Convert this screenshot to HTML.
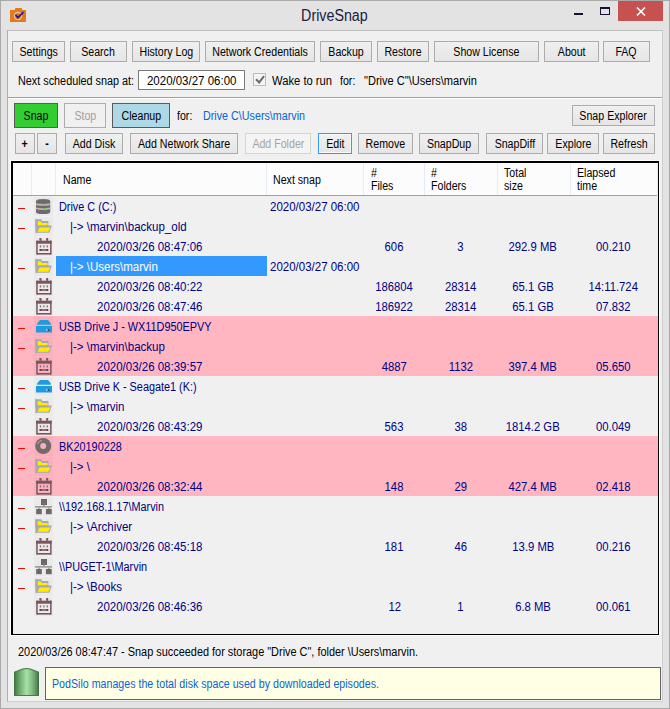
<!DOCTYPE html>
<html><head><meta charset="utf-8"><style>
*{box-sizing:border-box;margin:0;padding:0}
html,body{width:670px;height:709px;overflow:hidden}
body{position:relative;background:#e3e3e3;font-family:"Liberation Sans",sans-serif;font-size:12px;color:#000}
.abs{position:absolute}
.tx{position:absolute;white-space:nowrap}
.tx span{display:inline-block}
.win{position:absolute;left:0;top:0;width:670px;height:709px;border:1px solid #a9a9a9}
.panel{position:absolute;left:7px;top:30px;width:656px;height:672px;background:#f0f0f0;border-top:1px solid #c0c0c0;border-left:1px solid #b0b0b0;border-right:1px solid #cfcfcf;border-bottom:1px solid #cfcfcf}
.btn{position:absolute;border:1px solid #acacac;background:linear-gradient(#f0f0f0,#e5e5e5)}
.btn.dis{border-color:#d5d5d5;background:#f4f4f4}
.btn.focus{border-color:#3399ff;box-shadow:inset 0 0 0 1px #f4f9fd}
.row{position:absolute;left:13px;width:645px;height:20px}
.minus{position:absolute;left:18px;width:7px;height:1px;background:#f00}
.icbg{position:absolute;left:34px;width:19px;height:19px}
.ic{position:absolute;left:34px;width:18px;height:18px}
.ic svg{display:block}
.sel{position:absolute;left:56px;width:211px;height:20px;background:#3399ff}
.vsep{position:absolute;top:163px;width:1px;height:32px;background:#e3ecf7}
</style></head><body>
<div class="win"></div>
<svg class="abs" style="left:9px;top:7px" width="18" height="16" viewBox="0 0 18 16"><path d="M1 3 H5.5 L6.5 1 H12.5 L13.5 3 H17 V15 H1 Z" fill="#e07b22"/><circle cx="9" cy="9" r="4" fill="#f3c9a0"/><circle cx="9" cy="9" r="3" fill="#e07b22"/><path d="M6.5 7.8 L8.8 10.6 L14.5 5.2" stroke="#2c1a9a" stroke-width="1.8" fill="none"/></svg>
<div class="tx" style="left:-1px;top:7px;font-size:15.6px;line-height:18px;color:#202040;width:670px;text-align:center;"><span style="transform:scaleX(0.915);transform-origin:50% 0">DriveSnap</span></div>
<div class="abs" style="left:574px;top:13px;width:9px;height:2px;background:#1a1030"></div>
<div class="abs" style="left:600px;top:7px;width:10px;height:8px;border:1px solid #1a1030;border-top-width:2px"></div>
<div class="abs" style="left:618px;top:1px;width:45px;height:20px;background:#c75050"></div>
<svg class="abs" style="left:636px;top:7px" width="10" height="9" viewBox="0 0 10 9"><path d="M1 0.5 L9 8.5 M9 0.5 L1 8.5" stroke="#fff" stroke-width="1.6"/></svg>

<div class="panel"></div>
<div class="abs" style="left:8px;top:97px;width:654px;height:1px;background:#a0a0a0"></div>
<div class="abs" style="left:8px;top:98px;width:654px;height:1px;background:#ffffff"></div>

<div class="btn " style="left:12px;top:41px;width:53px;height:21px;"></div><div class="tx" style="left:12px;top:45px;font-size:12px;line-height:14px;width:53px;text-align:center;"><span style="transform:scaleX(0.885);transform-origin:50% 0">Settings</span></div>
<div class="btn " style="left:70px;top:41px;width:57px;height:21px;"></div><div class="tx" style="left:70px;top:45px;font-size:12px;line-height:14px;width:57px;text-align:center;"><span style="transform:scaleX(0.885);transform-origin:50% 0">Search</span></div>
<div class="btn " style="left:132px;top:41px;width:68px;height:21px;"></div><div class="tx" style="left:132px;top:45px;font-size:12px;line-height:14px;width:68px;text-align:center;"><span style="transform:scaleX(0.885);transform-origin:50% 0">History Log</span></div>
<div class="btn " style="left:205px;top:41px;width:110px;height:21px;"></div><div class="tx" style="left:205px;top:45px;font-size:12px;line-height:14px;width:110px;text-align:center;"><span style="transform:scaleX(0.885);transform-origin:50% 0">Network Credentials</span></div>
<div class="btn " style="left:320px;top:41px;width:52px;height:21px;"></div><div class="tx" style="left:320px;top:45px;font-size:12px;line-height:14px;width:52px;text-align:center;"><span style="transform:scaleX(0.885);transform-origin:50% 0">Backup</span></div>
<div class="btn " style="left:377px;top:41px;width:52px;height:21px;"></div><div class="tx" style="left:377px;top:45px;font-size:12px;line-height:14px;width:52px;text-align:center;"><span style="transform:scaleX(0.885);transform-origin:50% 0">Restore</span></div>
<div class="btn " style="left:434px;top:41px;width:105px;height:21px;"></div><div class="tx" style="left:434px;top:45px;font-size:12px;line-height:14px;width:105px;text-align:center;"><span style="transform:scaleX(0.885);transform-origin:50% 0">Show License</span></div>
<div class="btn " style="left:544px;top:41px;width:55px;height:21px;"></div><div class="tx" style="left:544px;top:45px;font-size:12px;line-height:14px;width:55px;text-align:center;"><span style="transform:scaleX(0.885);transform-origin:50% 0">About</span></div>
<div class="btn " style="left:603px;top:41px;width:47px;height:21px;"></div><div class="tx" style="left:603px;top:45px;font-size:12px;line-height:14px;width:47px;text-align:center;"><span style="transform:scaleX(0.885);transform-origin:50% 0">FAQ</span></div>
<div class="btn " style="left:15px;top:133px;width:20px;height:21px;"></div><div class="tx" style="left:15px;top:137px;font-size:12px;line-height:14px;width:20px;text-align:center;font-weight:bold;"><span style="transform:scaleX(0.885);transform-origin:50% 0">+</span></div>
<div class="btn " style="left:37px;top:133px;width:20px;height:21px;"></div><div class="tx" style="left:37px;top:137px;font-size:12px;line-height:14px;width:20px;text-align:center;font-weight:bold;"><span style="transform:scaleX(0.885);transform-origin:50% 0">-</span></div>
<div class="btn " style="left:65px;top:133px;width:58px;height:21px;"></div><div class="tx" style="left:65px;top:137px;font-size:12px;line-height:14px;width:58px;text-align:center;"><span style="transform:scaleX(0.885);transform-origin:50% 0">Add Disk</span></div>
<div class="btn " style="left:130px;top:133px;width:108px;height:21px;"></div><div class="tx" style="left:130px;top:137px;font-size:12px;line-height:14px;width:108px;text-align:center;"><span style="transform:scaleX(0.885);transform-origin:50% 0">Add Network Share</span></div>
<div class="btn dis" style="left:245px;top:133px;width:66px;height:21px;"></div><div class="tx" style="left:245px;top:137px;font-size:12px;line-height:14px;width:66px;text-align:center;color:#a3a3a3;"><span style="transform:scaleX(0.885);transform-origin:50% 0">Add Folder</span></div>
<div class="btn focus" style="left:318px;top:133px;width:34px;height:21px;"></div><div class="tx" style="left:318px;top:137px;font-size:12px;line-height:14px;width:34px;text-align:center;"><span style="transform:scaleX(0.885);transform-origin:50% 0">Edit</span></div>
<div class="btn " style="left:358px;top:133px;width:55px;height:21px;"></div><div class="tx" style="left:358px;top:137px;font-size:12px;line-height:14px;width:55px;text-align:center;"><span style="transform:scaleX(0.885);transform-origin:50% 0">Remove</span></div>
<div class="btn " style="left:419px;top:133px;width:60px;height:21px;"></div><div class="tx" style="left:419px;top:137px;font-size:12px;line-height:14px;width:60px;text-align:center;"><span style="transform:scaleX(0.885);transform-origin:50% 0">SnapDup</span></div>
<div class="btn " style="left:486px;top:133px;width:57px;height:21px;"></div><div class="tx" style="left:486px;top:137px;font-size:12px;line-height:14px;width:57px;text-align:center;"><span style="transform:scaleX(0.885);transform-origin:50% 0">SnapDiff</span></div>
<div class="btn " style="left:547px;top:133px;width:52px;height:21px;"></div><div class="tx" style="left:547px;top:137px;font-size:12px;line-height:14px;width:52px;text-align:center;"><span style="transform:scaleX(0.885);transform-origin:50% 0">Explore</span></div>
<div class="btn " style="left:603px;top:133px;width:52px;height:21px;"></div><div class="tx" style="left:603px;top:137px;font-size:12px;line-height:14px;width:52px;text-align:center;"><span style="transform:scaleX(0.885);transform-origin:50% 0">Refresh</span></div>
<div class="btn " style="left:572px;top:105px;width:83px;height:21px;"></div><div class="tx" style="left:572px;top:109px;font-size:12px;line-height:14px;width:83px;text-align:center;"><span style="transform:scaleX(0.885);transform-origin:50% 0">Snap Explorer</span></div>

<div class="tx" style="left:18px;top:74px;font-size:12px;line-height:14px;"><span style="transform:scaleX(0.902);transform-origin:0 0">Next scheduled snap at:</span></div>
<div class="abs" style="left:138px;top:70px;width:107px;height:20px;border:1px solid #7a7a7a;background:#fff"></div>
<div class="tx" style="left:138px;top:74px;font-size:12px;line-height:14px;width:107px;text-align:center;"><span style="transform:scaleX(0.958);transform-origin:50% 0">2020/03/27 06:00</span></div>
<div class="abs" style="left:253px;top:73px;width:13px;height:13px;border:1px solid #bcbcbc;background:#f4f4f4"></div>
<svg class="abs" style="left:253px;top:73px" width="13" height="13" viewBox="0 0 13 13"><path d="M3 6.2 L6.2 9.4 L11 3.2" stroke="#6f6a6a" stroke-width="2" fill="none"/></svg>
<div class="tx" style="left:272px;top:74px;font-size:12px;line-height:14px;"><span style="transform:scaleX(0.935);transform-origin:0 0">Wake to run</span></div>
<div class="tx" style="left:340px;top:74px;font-size:12px;line-height:14px;"><span style="transform:scaleX(0.885);transform-origin:0 0">for:</span></div>
<div class="tx" style="left:364px;top:74px;font-size:12px;line-height:14px;"><span style="transform:scaleX(0.922);transform-origin:0 0">&quot;Drive C&quot;\Users\marvin</span></div>

<div class="abs" style="left:14px;top:103px;width:44px;height:25px;border:1px solid #5a5a5a;background:#32cd32"></div>
<div class="tx" style="left:14px;top:109px;font-size:12px;line-height:14px;width:44px;text-align:center;"><span style="transform:scaleX(0.885);transform-origin:50% 0">Snap</span></div>
<div class="abs" style="left:64px;top:103px;width:42px;height:25px;border:1px solid #adadad;background:#f0f0f0"></div>
<div class="tx" style="left:64px;top:109px;font-size:12px;line-height:14px;color:#a0a0a0;width:42px;text-align:center;"><span style="transform:scaleX(0.885);transform-origin:50% 0">Stop</span></div>
<div class="abs" style="left:112px;top:103px;width:58px;height:25px;border:1px solid #5a5a5a;background:#add8e6"></div>
<div class="tx" style="left:112px;top:109px;font-size:12px;line-height:14px;width:58px;text-align:center;"><span style="transform:scaleX(0.885);transform-origin:50% 0">Cleanup</span></div>
<div class="tx" style="left:177px;top:109px;font-size:12px;line-height:14px;"><span style="transform:scaleX(0.885);transform-origin:0 0">for:</span></div>
<div class="tx" style="left:203px;top:109px;font-size:12px;line-height:14px;color:#0a64d2;"><span style="transform:scaleX(0.895);transform-origin:0 0">Drive C\Users\marvin</span></div>

<div class="abs" style="left:10px;top:160px;width:650px;height:476px;border:1px solid #fff"></div>
<div class="abs" style="left:11px;top:161px;width:648px;height:474px;border-top:2px solid #000;border-left:2px solid #000;border-right:1px solid #000;border-bottom:1px solid #000;background:#f0f0f0"></div>
<div class="abs" style="left:13px;top:163px;width:645px;height:32px;background:#fcfcfc"></div>
<div class="abs" style="left:13px;top:195px;width:644px;height:1px;background:#a0a0a0"></div>
<div class="vsep" style="left:31px"></div>
<div class="vsep" style="left:55px"></div>
<div class="vsep" style="left:266px"></div>
<div class="vsep" style="left:363px"></div>
<div class="vsep" style="left:424px"></div>
<div class="vsep" style="left:497px"></div>
<div class="vsep" style="left:570px"></div>
<div class="vsep" style="left:657px"></div>
<div class="tx" style="left:63px;top:173px;font-size:12px;line-height:14px;"><span style="transform:scaleX(0.885);transform-origin:0 0">Name</span></div>
<div class="tx" style="left:273px;top:173px;font-size:12px;line-height:14px;"><span style="transform:scaleX(0.885);transform-origin:0 0">Next snap</span></div>
<div class="tx" style="left:371px;top:167px;font-size:12px;line-height:13px;"><span style="transform:scaleX(0.885);transform-origin:0 0">#</span></div><div class="tx" style="left:371px;top:180px;font-size:12px;line-height:13px;"><span style="transform:scaleX(0.885);transform-origin:0 0">Files</span></div>
<div class="tx" style="left:431px;top:167px;font-size:12px;line-height:13px;"><span style="transform:scaleX(0.885);transform-origin:0 0">#</span></div><div class="tx" style="left:431px;top:180px;font-size:12px;line-height:13px;"><span style="transform:scaleX(0.885);transform-origin:0 0">Folders</span></div>
<div class="tx" style="left:504px;top:167px;font-size:12px;line-height:13px;"><span style="transform:scaleX(0.885);transform-origin:0 0">Total</span></div><div class="tx" style="left:504px;top:180px;font-size:12px;line-height:13px;"><span style="transform:scaleX(0.885);transform-origin:0 0">size</span></div>
<div class="tx" style="left:577px;top:167px;font-size:12px;line-height:13px;"><span style="transform:scaleX(0.885);transform-origin:0 0">Elapsed</span></div><div class="tx" style="left:577px;top:180px;font-size:12px;line-height:13px;"><span style="transform:scaleX(0.885);transform-origin:0 0">time</span></div>

<div class="row" style="top:196px;background:#f0f0f0"></div><div class="minus" style="top:208px"></div><div class="icbg" style="top:197px;background:#eaeaea"></div><div class="ic" style="top:197px"><svg width="18" height="18" viewBox="0 0 18 18"><path d="M2 4 Q2 2 9 2 Q16.2 2 16.2 4 V15 Q16.2 17 9 17 Q2 17 2 15 Z" fill="#6e6868"/><path d="M2 6.3 Q9 7.6 16.2 6.3 V8.2 Q9 9.5 2 8.2 Z" fill="#bab5b5"/><path d="M2 10.6 Q9 11.9 16.2 10.6 V12.3 Q9 13.6 2 12.3 Z" fill="#bab5b5"/><g fill="#3fc23f"><rect x="6.8" y="5.8" width="1.3" height="1.3"/><rect x="12" y="5.8" width="1.3" height="1.3"/><rect x="9.8" y="10.8" width="1.3" height="1.3"/></g><g fill="#c47a8a"><rect x="2.8" y="3" width="1" height="1"/><rect x="8.5" y="2.2" width="1" height="1"/><rect x="4" y="12.8" width="1" height="1"/><rect x="11" y="12.8" width="1" height="1"/></g></svg></div><div class="tx" style="left:59px;top:200px;font-size:12px;line-height:14px;color:#000080;"><span style="transform:scaleX(0.905);transform-origin:0 0">Drive C (C:)</span></div><div class="tx" style="left:270px;top:200px;font-size:12px;line-height:14px;color:#000080;"><span style="transform:scaleX(0.958);transform-origin:0 0">2020/03/27 06:00</span></div>
<div class="row" style="top:216px;background:#f0f0f0"></div><div class="minus" style="top:228px"></div><div class="icbg" style="top:217px;background:#eaeaea"></div><div class="ic" style="top:217px"><svg width="18" height="18" viewBox="0 0 18 18"><path d="M1.4 2.3 H7.2 L8.2 4 H14.4 V11 H1.4 Z" fill="#a8a8b2"/><path d="M3.6 4.2 H6.8 L7.8 6 H13.6 V8.6 H3.6 Z" fill="#ffec00"/><path d="M4.2 8.6 H17.8 L15.4 15.8 H1.6 Z" fill="#a8a8b2"/><path d="M5.6 10.4 H16.4 L14.2 14.8 H3.4 Z" fill="#ffec00"/><rect x="1.4" y="2.3" width="1.9" height="13.5" fill="#a8a8b2"/></svg></div><div class="tx" style="left:70px;top:220px;font-size:12px;line-height:14px;color:#000080;"><span style="transform:scaleX(0.96);transform-origin:0 0">|-&gt; \marvin\backup_old</span></div>
<div class="row" style="top:236px;background:#f0f0f0"></div><div class="icbg" style="top:237px;background:#eaeaea"></div><div class="ic" style="top:237px"><svg width="18" height="18" viewBox="0 0 18 18"><g fill="#7a565c"><rect x="2.2" y="3.7" width="15.4" height="3"/><rect x="2.2" y="3.7" width="1.5" height="13.9"/><rect x="16.1" y="3.7" width="1.5" height="13.9"/><rect x="3" y="16" width="14" height="1.6"/><path d="M5.4 1 H7.2 L8 3.8 H5.4 Z"/><path d="M12.4 1 H14.2 L14.2 3.8 H11.8 Z"/></g><g fill="#7f6a6e"><rect x="5.8" y="8.4" width="1.3" height="2"/><rect x="12.6" y="8.4" width="1.3" height="2"/></g><rect x="9.2" y="8.4" width="1.3" height="2" fill="#8a7478"/><rect x="5.6" y="12" width="8.6" height="1.9" fill="#8a6a70"/><g fill="#6a3e46"><rect x="5.6" y="12" width="1.8" height="1.9"/><rect x="12.4" y="12" width="1.8" height="1.9"/></g></svg></div><div class="tx" style="left:97px;top:240px;font-size:12px;line-height:14px;color:#000080;"><span style="transform:scaleX(0.958);transform-origin:0 0">2020/03/26 08:47:06</span></div><div class="tx" style="left:344.5px;top:240px;font-size:12px;line-height:14px;color:#000080;width:100px;text-align:center;"><span style="transform:scaleX(0.94);transform-origin:50% 0">606</span></div><div class="tx" style="left:410.5px;top:240px;font-size:12px;line-height:14px;color:#000080;width:100px;text-align:center;"><span style="transform:scaleX(0.94);transform-origin:50% 0">3</span></div><div class="tx" style="left:483px;top:240px;font-size:12px;line-height:14px;color:#000080;width:100px;text-align:center;"><span style="transform:scaleX(0.94);transform-origin:50% 0">292.9 MB</span></div><div class="tx" style="left:563px;top:240px;font-size:12px;line-height:14px;color:#000080;width:100px;text-align:center;"><span style="transform:scaleX(0.94);transform-origin:50% 0">00.210</span></div>
<div class="row" style="top:256px;background:#f0f0f0"></div><div class="minus" style="top:268px"></div><div class="icbg" style="top:257px;background:#eaeaea"></div><div class="ic" style="top:257px"><svg width="18" height="18" viewBox="0 0 18 18"><path d="M1.4 2.3 H7.2 L8.2 4 H14.4 V11 H1.4 Z" fill="#a8a8b2"/><path d="M3.6 4.2 H6.8 L7.8 6 H13.6 V8.6 H3.6 Z" fill="#ffec00"/><path d="M4.2 8.6 H17.8 L15.4 15.8 H1.6 Z" fill="#a8a8b2"/><path d="M5.6 10.4 H16.4 L14.2 14.8 H3.4 Z" fill="#ffec00"/><rect x="1.4" y="2.3" width="1.9" height="13.5" fill="#a8a8b2"/></svg></div><div class="sel" style="top:256px"></div><div class="tx" style="left:70px;top:260px;font-size:12px;line-height:14px;color:#fff;"><span style="transform:scaleX(0.96);transform-origin:0 0">|-&gt; \Users\marvin</span></div><div class="tx" style="left:270px;top:260px;font-size:12px;line-height:14px;color:#000080;"><span style="transform:scaleX(0.958);transform-origin:0 0">2020/03/27 06:00</span></div>
<div class="row" style="top:276px;background:#f0f0f0"></div><div class="icbg" style="top:277px;background:#eaeaea"></div><div class="ic" style="top:277px"><svg width="18" height="18" viewBox="0 0 18 18"><g fill="#7a565c"><rect x="2.2" y="3.7" width="15.4" height="3"/><rect x="2.2" y="3.7" width="1.5" height="13.9"/><rect x="16.1" y="3.7" width="1.5" height="13.9"/><rect x="3" y="16" width="14" height="1.6"/><path d="M5.4 1 H7.2 L8 3.8 H5.4 Z"/><path d="M12.4 1 H14.2 L14.2 3.8 H11.8 Z"/></g><g fill="#7f6a6e"><rect x="5.8" y="8.4" width="1.3" height="2"/><rect x="12.6" y="8.4" width="1.3" height="2"/></g><rect x="9.2" y="8.4" width="1.3" height="2" fill="#8a7478"/><rect x="5.6" y="12" width="8.6" height="1.9" fill="#8a6a70"/><g fill="#6a3e46"><rect x="5.6" y="12" width="1.8" height="1.9"/><rect x="12.4" y="12" width="1.8" height="1.9"/></g></svg></div><div class="tx" style="left:97px;top:280px;font-size:12px;line-height:14px;color:#000080;"><span style="transform:scaleX(0.958);transform-origin:0 0">2020/03/26 08:40:22</span></div><div class="tx" style="left:344.5px;top:280px;font-size:12px;line-height:14px;color:#000080;width:100px;text-align:center;"><span style="transform:scaleX(0.94);transform-origin:50% 0">186804</span></div><div class="tx" style="left:410.5px;top:280px;font-size:12px;line-height:14px;color:#000080;width:100px;text-align:center;"><span style="transform:scaleX(0.94);transform-origin:50% 0">28314</span></div><div class="tx" style="left:483px;top:280px;font-size:12px;line-height:14px;color:#000080;width:100px;text-align:center;"><span style="transform:scaleX(0.94);transform-origin:50% 0">65.1 GB</span></div><div class="tx" style="left:563px;top:280px;font-size:12px;line-height:14px;color:#000080;width:100px;text-align:center;"><span style="transform:scaleX(0.94);transform-origin:50% 0">14:11.724</span></div>
<div class="row" style="top:296px;background:#f0f0f0"></div><div class="icbg" style="top:297px;background:#eaeaea"></div><div class="ic" style="top:297px"><svg width="18" height="18" viewBox="0 0 18 18"><g fill="#7a565c"><rect x="2.2" y="3.7" width="15.4" height="3"/><rect x="2.2" y="3.7" width="1.5" height="13.9"/><rect x="16.1" y="3.7" width="1.5" height="13.9"/><rect x="3" y="16" width="14" height="1.6"/><path d="M5.4 1 H7.2 L8 3.8 H5.4 Z"/><path d="M12.4 1 H14.2 L14.2 3.8 H11.8 Z"/></g><g fill="#7f6a6e"><rect x="5.8" y="8.4" width="1.3" height="2"/><rect x="12.6" y="8.4" width="1.3" height="2"/></g><rect x="9.2" y="8.4" width="1.3" height="2" fill="#8a7478"/><rect x="5.6" y="12" width="8.6" height="1.9" fill="#8a6a70"/><g fill="#6a3e46"><rect x="5.6" y="12" width="1.8" height="1.9"/><rect x="12.4" y="12" width="1.8" height="1.9"/></g></svg></div><div class="tx" style="left:97px;top:300px;font-size:12px;line-height:14px;color:#000080;"><span style="transform:scaleX(0.958);transform-origin:0 0">2020/03/26 08:47:46</span></div><div class="tx" style="left:344.5px;top:300px;font-size:12px;line-height:14px;color:#000080;width:100px;text-align:center;"><span style="transform:scaleX(0.94);transform-origin:50% 0">186922</span></div><div class="tx" style="left:410.5px;top:300px;font-size:12px;line-height:14px;color:#000080;width:100px;text-align:center;"><span style="transform:scaleX(0.94);transform-origin:50% 0">28314</span></div><div class="tx" style="left:483px;top:300px;font-size:12px;line-height:14px;color:#000080;width:100px;text-align:center;"><span style="transform:scaleX(0.94);transform-origin:50% 0">65.1 GB</span></div><div class="tx" style="left:563px;top:300px;font-size:12px;line-height:14px;color:#000080;width:100px;text-align:center;"><span style="transform:scaleX(0.94);transform-origin:50% 0">07.832</span></div>
<div class="row" style="top:316px;background:#ffb6c1"></div><div class="minus" style="top:328px"></div><div class="icbg" style="top:317px;background:#f9b0bc"></div><div class="ic" style="top:317px"><svg width="18" height="18" viewBox="0 0 18 18"><path d="M6 3 H14 L17 6.6 V7.8 H3 V6.6 Z" fill="#1f9be0"/><rect x="2" y="9" width="16" height="6.5" fill="#1f9be0"/><rect x="12.2" y="12" width="1.2" height="1.6" fill="#f0e0e0"/><rect x="13.8" y="12.4" width="1.6" height="1.2" fill="#20204a"/></svg></div><div class="tx" style="left:59px;top:320px;font-size:12px;line-height:14px;color:#000080;"><span style="transform:scaleX(0.905);transform-origin:0 0">USB Drive J - WX11D950EPVY</span></div>
<div class="row" style="top:336px;background:#ffb6c1"></div><div class="minus" style="top:348px"></div><div class="icbg" style="top:337px;background:#f9b0bc"></div><div class="ic" style="top:337px"><svg width="18" height="18" viewBox="0 0 18 18"><path d="M1.4 2.3 H7.2 L8.2 4 H14.4 V11 H1.4 Z" fill="#a8a8b2"/><path d="M3.6 4.2 H6.8 L7.8 6 H13.6 V8.6 H3.6 Z" fill="#ffec00"/><path d="M4.2 8.6 H17.8 L15.4 15.8 H1.6 Z" fill="#a8a8b2"/><path d="M5.6 10.4 H16.4 L14.2 14.8 H3.4 Z" fill="#ffec00"/><rect x="1.4" y="2.3" width="1.9" height="13.5" fill="#a8a8b2"/></svg></div><div class="tx" style="left:70px;top:340px;font-size:12px;line-height:14px;color:#000080;"><span style="transform:scaleX(0.96);transform-origin:0 0">|-&gt; \marvin\backup</span></div>
<div class="row" style="top:356px;background:#ffb6c1"></div><div class="icbg" style="top:357px;background:#f9b0bc"></div><div class="ic" style="top:357px"><svg width="18" height="18" viewBox="0 0 18 18"><g fill="#7a565c"><rect x="2.2" y="3.7" width="15.4" height="3"/><rect x="2.2" y="3.7" width="1.5" height="13.9"/><rect x="16.1" y="3.7" width="1.5" height="13.9"/><rect x="3" y="16" width="14" height="1.6"/><path d="M5.4 1 H7.2 L8 3.8 H5.4 Z"/><path d="M12.4 1 H14.2 L14.2 3.8 H11.8 Z"/></g><g fill="#7f6a6e"><rect x="5.8" y="8.4" width="1.3" height="2"/><rect x="12.6" y="8.4" width="1.3" height="2"/></g><rect x="9.2" y="8.4" width="1.3" height="2" fill="#8a7478"/><rect x="5.6" y="12" width="8.6" height="1.9" fill="#8a6a70"/><g fill="#6a3e46"><rect x="5.6" y="12" width="1.8" height="1.9"/><rect x="12.4" y="12" width="1.8" height="1.9"/></g></svg></div><div class="tx" style="left:97px;top:360px;font-size:12px;line-height:14px;color:#000080;"><span style="transform:scaleX(0.958);transform-origin:0 0">2020/03/26 08:39:57</span></div><div class="tx" style="left:344.5px;top:360px;font-size:12px;line-height:14px;color:#000080;width:100px;text-align:center;"><span style="transform:scaleX(0.94);transform-origin:50% 0">4887</span></div><div class="tx" style="left:410.5px;top:360px;font-size:12px;line-height:14px;color:#000080;width:100px;text-align:center;"><span style="transform:scaleX(0.94);transform-origin:50% 0">1132</span></div><div class="tx" style="left:483px;top:360px;font-size:12px;line-height:14px;color:#000080;width:100px;text-align:center;"><span style="transform:scaleX(0.94);transform-origin:50% 0">397.4 MB</span></div><div class="tx" style="left:563px;top:360px;font-size:12px;line-height:14px;color:#000080;width:100px;text-align:center;"><span style="transform:scaleX(0.94);transform-origin:50% 0">05.650</span></div>
<div class="row" style="top:376px;background:#f0f0f0"></div><div class="minus" style="top:388px"></div><div class="icbg" style="top:377px;background:#eaeaea"></div><div class="ic" style="top:377px"><svg width="18" height="18" viewBox="0 0 18 18"><path d="M6 3 H14 L17 6.6 V7.8 H3 V6.6 Z" fill="#1f9be0"/><rect x="2" y="9" width="16" height="6.5" fill="#1f9be0"/><rect x="12.2" y="12" width="1.2" height="1.6" fill="#f0e0e0"/><rect x="13.8" y="12.4" width="1.6" height="1.2" fill="#20204a"/></svg></div><div class="tx" style="left:59px;top:380px;font-size:12px;line-height:14px;color:#000080;"><span style="transform:scaleX(0.905);transform-origin:0 0">USB Drive K - Seagate1 (K:)</span></div>
<div class="row" style="top:396px;background:#f0f0f0"></div><div class="minus" style="top:408px"></div><div class="icbg" style="top:397px;background:#eaeaea"></div><div class="ic" style="top:397px"><svg width="18" height="18" viewBox="0 0 18 18"><path d="M1.4 2.3 H7.2 L8.2 4 H14.4 V11 H1.4 Z" fill="#a8a8b2"/><path d="M3.6 4.2 H6.8 L7.8 6 H13.6 V8.6 H3.6 Z" fill="#ffec00"/><path d="M4.2 8.6 H17.8 L15.4 15.8 H1.6 Z" fill="#a8a8b2"/><path d="M5.6 10.4 H16.4 L14.2 14.8 H3.4 Z" fill="#ffec00"/><rect x="1.4" y="2.3" width="1.9" height="13.5" fill="#a8a8b2"/></svg></div><div class="tx" style="left:70px;top:400px;font-size:12px;line-height:14px;color:#000080;"><span style="transform:scaleX(0.96);transform-origin:0 0">|-&gt; \marvin</span></div>
<div class="row" style="top:416px;background:#f0f0f0"></div><div class="icbg" style="top:417px;background:#eaeaea"></div><div class="ic" style="top:417px"><svg width="18" height="18" viewBox="0 0 18 18"><g fill="#7a565c"><rect x="2.2" y="3.7" width="15.4" height="3"/><rect x="2.2" y="3.7" width="1.5" height="13.9"/><rect x="16.1" y="3.7" width="1.5" height="13.9"/><rect x="3" y="16" width="14" height="1.6"/><path d="M5.4 1 H7.2 L8 3.8 H5.4 Z"/><path d="M12.4 1 H14.2 L14.2 3.8 H11.8 Z"/></g><g fill="#7f6a6e"><rect x="5.8" y="8.4" width="1.3" height="2"/><rect x="12.6" y="8.4" width="1.3" height="2"/></g><rect x="9.2" y="8.4" width="1.3" height="2" fill="#8a7478"/><rect x="5.6" y="12" width="8.6" height="1.9" fill="#8a6a70"/><g fill="#6a3e46"><rect x="5.6" y="12" width="1.8" height="1.9"/><rect x="12.4" y="12" width="1.8" height="1.9"/></g></svg></div><div class="tx" style="left:97px;top:420px;font-size:12px;line-height:14px;color:#000080;"><span style="transform:scaleX(0.958);transform-origin:0 0">2020/03/26 08:43:29</span></div><div class="tx" style="left:344.5px;top:420px;font-size:12px;line-height:14px;color:#000080;width:100px;text-align:center;"><span style="transform:scaleX(0.94);transform-origin:50% 0">563</span></div><div class="tx" style="left:410.5px;top:420px;font-size:12px;line-height:14px;color:#000080;width:100px;text-align:center;"><span style="transform:scaleX(0.94);transform-origin:50% 0">38</span></div><div class="tx" style="left:483px;top:420px;font-size:12px;line-height:14px;color:#000080;width:100px;text-align:center;"><span style="transform:scaleX(0.94);transform-origin:50% 0">1814.2 GB</span></div><div class="tx" style="left:563px;top:420px;font-size:12px;line-height:14px;color:#000080;width:100px;text-align:center;"><span style="transform:scaleX(0.94);transform-origin:50% 0">00.049</span></div>
<div class="row" style="top:436px;background:#ffb6c1"></div><div class="minus" style="top:448px"></div><div class="icbg" style="top:437px;background:#f9b0bc"></div><div class="ic" style="top:437px"><svg width="18" height="18" viewBox="0 0 18 18"><circle cx="9.2" cy="9" r="8" fill="#726a6b"/><circle cx="9.2" cy="9" r="3" fill="#f7b0bd"/><path d="M3.4 7.4 A6.2 6.2 0 0 1 8 3.3" stroke="#c08c96" stroke-width="1.2" fill="none"/></svg></div><div class="tx" style="left:59px;top:440px;font-size:12px;line-height:14px;color:#000080;"><span style="transform:scaleX(0.905);transform-origin:0 0">BK20190228</span></div>
<div class="row" style="top:456px;background:#ffb6c1"></div><div class="minus" style="top:468px"></div><div class="icbg" style="top:457px;background:#f9b0bc"></div><div class="ic" style="top:457px"><svg width="18" height="18" viewBox="0 0 18 18"><path d="M1.4 2.3 H7.2 L8.2 4 H14.4 V11 H1.4 Z" fill="#a8a8b2"/><path d="M3.6 4.2 H6.8 L7.8 6 H13.6 V8.6 H3.6 Z" fill="#ffec00"/><path d="M4.2 8.6 H17.8 L15.4 15.8 H1.6 Z" fill="#a8a8b2"/><path d="M5.6 10.4 H16.4 L14.2 14.8 H3.4 Z" fill="#ffec00"/><rect x="1.4" y="2.3" width="1.9" height="13.5" fill="#a8a8b2"/></svg></div><div class="tx" style="left:70px;top:460px;font-size:12px;line-height:14px;color:#000080;"><span style="transform:scaleX(0.96);transform-origin:0 0">|-&gt; \</span></div>
<div class="row" style="top:476px;background:#ffb6c1"></div><div class="icbg" style="top:477px;background:#f9b0bc"></div><div class="ic" style="top:477px"><svg width="18" height="18" viewBox="0 0 18 18"><g fill="#7a565c"><rect x="2.2" y="3.7" width="15.4" height="3"/><rect x="2.2" y="3.7" width="1.5" height="13.9"/><rect x="16.1" y="3.7" width="1.5" height="13.9"/><rect x="3" y="16" width="14" height="1.6"/><path d="M5.4 1 H7.2 L8 3.8 H5.4 Z"/><path d="M12.4 1 H14.2 L14.2 3.8 H11.8 Z"/></g><g fill="#7f6a6e"><rect x="5.8" y="8.4" width="1.3" height="2"/><rect x="12.6" y="8.4" width="1.3" height="2"/></g><rect x="9.2" y="8.4" width="1.3" height="2" fill="#8a7478"/><rect x="5.6" y="12" width="8.6" height="1.9" fill="#8a6a70"/><g fill="#6a3e46"><rect x="5.6" y="12" width="1.8" height="1.9"/><rect x="12.4" y="12" width="1.8" height="1.9"/></g></svg></div><div class="tx" style="left:97px;top:480px;font-size:12px;line-height:14px;color:#000080;"><span style="transform:scaleX(0.958);transform-origin:0 0">2020/03/26 08:32:44</span></div><div class="tx" style="left:344.5px;top:480px;font-size:12px;line-height:14px;color:#000080;width:100px;text-align:center;"><span style="transform:scaleX(0.94);transform-origin:50% 0">148</span></div><div class="tx" style="left:410.5px;top:480px;font-size:12px;line-height:14px;color:#000080;width:100px;text-align:center;"><span style="transform:scaleX(0.94);transform-origin:50% 0">29</span></div><div class="tx" style="left:483px;top:480px;font-size:12px;line-height:14px;color:#000080;width:100px;text-align:center;"><span style="transform:scaleX(0.94);transform-origin:50% 0">427.4 MB</span></div><div class="tx" style="left:563px;top:480px;font-size:12px;line-height:14px;color:#000080;width:100px;text-align:center;"><span style="transform:scaleX(0.94);transform-origin:50% 0">02.418</span></div>
<div class="row" style="top:496px;background:#f0f0f0"></div><div class="minus" style="top:508px"></div><div class="icbg" style="top:497px;background:#eaeaea"></div><div class="ic" style="top:497px"><svg width="18" height="18" viewBox="0 0 18 18"><g fill="#6f6767"><rect x="7" y="2" width="6" height="6"/><rect x="2.2" y="12" width="5.6" height="5.2"/><rect x="11.9" y="12" width="5.8" height="5.2"/><rect x="9.5" y="8" width="1" height="1.5"/><rect x="4.5" y="10.5" width="1" height="1.5"/><rect x="14.5" y="10.5" width="1" height="1.5"/></g><rect x="1" y="9" width="18" height="1.7" fill="#9e9e9e"/><rect x="9.5" y="6" width="1" height="1" fill="#3c3"/></svg></div><div class="tx" style="left:59px;top:500px;font-size:12px;line-height:14px;color:#000080;"><span style="transform:scaleX(0.905);transform-origin:0 0">\\192.168.1.17\Marvin</span></div>
<div class="row" style="top:516px;background:#f0f0f0"></div><div class="minus" style="top:528px"></div><div class="icbg" style="top:517px;background:#eaeaea"></div><div class="ic" style="top:517px"><svg width="18" height="18" viewBox="0 0 18 18"><path d="M1.4 2.3 H7.2 L8.2 4 H14.4 V11 H1.4 Z" fill="#a8a8b2"/><path d="M3.6 4.2 H6.8 L7.8 6 H13.6 V8.6 H3.6 Z" fill="#ffec00"/><path d="M4.2 8.6 H17.8 L15.4 15.8 H1.6 Z" fill="#a8a8b2"/><path d="M5.6 10.4 H16.4 L14.2 14.8 H3.4 Z" fill="#ffec00"/><rect x="1.4" y="2.3" width="1.9" height="13.5" fill="#a8a8b2"/></svg></div><div class="tx" style="left:70px;top:520px;font-size:12px;line-height:14px;color:#000080;"><span style="transform:scaleX(0.96);transform-origin:0 0">|-&gt; \Archiver</span></div>
<div class="row" style="top:536px;background:#f0f0f0"></div><div class="icbg" style="top:537px;background:#eaeaea"></div><div class="ic" style="top:537px"><svg width="18" height="18" viewBox="0 0 18 18"><g fill="#7a565c"><rect x="2.2" y="3.7" width="15.4" height="3"/><rect x="2.2" y="3.7" width="1.5" height="13.9"/><rect x="16.1" y="3.7" width="1.5" height="13.9"/><rect x="3" y="16" width="14" height="1.6"/><path d="M5.4 1 H7.2 L8 3.8 H5.4 Z"/><path d="M12.4 1 H14.2 L14.2 3.8 H11.8 Z"/></g><g fill="#7f6a6e"><rect x="5.8" y="8.4" width="1.3" height="2"/><rect x="12.6" y="8.4" width="1.3" height="2"/></g><rect x="9.2" y="8.4" width="1.3" height="2" fill="#8a7478"/><rect x="5.6" y="12" width="8.6" height="1.9" fill="#8a6a70"/><g fill="#6a3e46"><rect x="5.6" y="12" width="1.8" height="1.9"/><rect x="12.4" y="12" width="1.8" height="1.9"/></g></svg></div><div class="tx" style="left:97px;top:540px;font-size:12px;line-height:14px;color:#000080;"><span style="transform:scaleX(0.958);transform-origin:0 0">2020/03/26 08:45:18</span></div><div class="tx" style="left:344.5px;top:540px;font-size:12px;line-height:14px;color:#000080;width:100px;text-align:center;"><span style="transform:scaleX(0.94);transform-origin:50% 0">181</span></div><div class="tx" style="left:410.5px;top:540px;font-size:12px;line-height:14px;color:#000080;width:100px;text-align:center;"><span style="transform:scaleX(0.94);transform-origin:50% 0">46</span></div><div class="tx" style="left:483px;top:540px;font-size:12px;line-height:14px;color:#000080;width:100px;text-align:center;"><span style="transform:scaleX(0.94);transform-origin:50% 0">13.9 MB</span></div><div class="tx" style="left:563px;top:540px;font-size:12px;line-height:14px;color:#000080;width:100px;text-align:center;"><span style="transform:scaleX(0.94);transform-origin:50% 0">00.216</span></div>
<div class="row" style="top:556px;background:#f0f0f0"></div><div class="minus" style="top:568px"></div><div class="icbg" style="top:557px;background:#eaeaea"></div><div class="ic" style="top:557px"><svg width="18" height="18" viewBox="0 0 18 18"><g fill="#6f6767"><rect x="7" y="2" width="6" height="6"/><rect x="2.2" y="12" width="5.6" height="5.2"/><rect x="11.9" y="12" width="5.8" height="5.2"/><rect x="9.5" y="8" width="1" height="1.5"/><rect x="4.5" y="10.5" width="1" height="1.5"/><rect x="14.5" y="10.5" width="1" height="1.5"/></g><rect x="1" y="9" width="18" height="1.7" fill="#9e9e9e"/><rect x="9.5" y="6" width="1" height="1" fill="#3c3"/></svg></div><div class="tx" style="left:59px;top:560px;font-size:12px;line-height:14px;color:#000080;"><span style="transform:scaleX(0.905);transform-origin:0 0">\\PUGET-1\Marvin</span></div>
<div class="row" style="top:576px;background:#f0f0f0"></div><div class="minus" style="top:588px"></div><div class="icbg" style="top:577px;background:#eaeaea"></div><div class="ic" style="top:577px"><svg width="18" height="18" viewBox="0 0 18 18"><path d="M1.4 2.3 H7.2 L8.2 4 H14.4 V11 H1.4 Z" fill="#a8a8b2"/><path d="M3.6 4.2 H6.8 L7.8 6 H13.6 V8.6 H3.6 Z" fill="#ffec00"/><path d="M4.2 8.6 H17.8 L15.4 15.8 H1.6 Z" fill="#a8a8b2"/><path d="M5.6 10.4 H16.4 L14.2 14.8 H3.4 Z" fill="#ffec00"/><rect x="1.4" y="2.3" width="1.9" height="13.5" fill="#a8a8b2"/></svg></div><div class="tx" style="left:70px;top:580px;font-size:12px;line-height:14px;color:#000080;"><span style="transform:scaleX(0.96);transform-origin:0 0">|-&gt; \Books</span></div>
<div class="row" style="top:596px;background:#f0f0f0"></div><div class="icbg" style="top:597px;background:#eaeaea"></div><div class="ic" style="top:597px"><svg width="18" height="18" viewBox="0 0 18 18"><g fill="#7a565c"><rect x="2.2" y="3.7" width="15.4" height="3"/><rect x="2.2" y="3.7" width="1.5" height="13.9"/><rect x="16.1" y="3.7" width="1.5" height="13.9"/><rect x="3" y="16" width="14" height="1.6"/><path d="M5.4 1 H7.2 L8 3.8 H5.4 Z"/><path d="M12.4 1 H14.2 L14.2 3.8 H11.8 Z"/></g><g fill="#7f6a6e"><rect x="5.8" y="8.4" width="1.3" height="2"/><rect x="12.6" y="8.4" width="1.3" height="2"/></g><rect x="9.2" y="8.4" width="1.3" height="2" fill="#8a7478"/><rect x="5.6" y="12" width="8.6" height="1.9" fill="#8a6a70"/><g fill="#6a3e46"><rect x="5.6" y="12" width="1.8" height="1.9"/><rect x="12.4" y="12" width="1.8" height="1.9"/></g></svg></div><div class="tx" style="left:97px;top:600px;font-size:12px;line-height:14px;color:#000080;"><span style="transform:scaleX(0.958);transform-origin:0 0">2020/03/26 08:46:36</span></div><div class="tx" style="left:344.5px;top:600px;font-size:12px;line-height:14px;color:#000080;width:100px;text-align:center;"><span style="transform:scaleX(0.94);transform-origin:50% 0">12</span></div><div class="tx" style="left:410.5px;top:600px;font-size:12px;line-height:14px;color:#000080;width:100px;text-align:center;"><span style="transform:scaleX(0.94);transform-origin:50% 0">1</span></div><div class="tx" style="left:483px;top:600px;font-size:12px;line-height:14px;color:#000080;width:100px;text-align:center;"><span style="transform:scaleX(0.94);transform-origin:50% 0">6.8 MB</span></div><div class="tx" style="left:563px;top:600px;font-size:12px;line-height:14px;color:#000080;width:100px;text-align:center;"><span style="transform:scaleX(0.94);transform-origin:50% 0">00.061</span></div>

<div class="tx" style="left:18px;top:645px;font-size:12px;line-height:14px;"><span style="transform:scaleX(0.909);transform-origin:0 0">2020/03/26 08:47:47 - Snap succeeded for storage &quot;Drive C&quot;, folder \Users\marvin.</span></div>

<svg class="abs" style="left:13px;top:667px" width="27" height="30" viewBox="0 0 27 30">
<defs><linearGradient id="sg" x1="0" x2="1" y1="0" y2="0">
<stop offset="0" stop-color="#3d6e3d"/><stop offset="0.15" stop-color="#5e9a5e"/><stop offset="0.5" stop-color="#a6e2a6"/><stop offset="0.7" stop-color="#86c086"/><stop offset="0.9" stop-color="#5a8e5a"/><stop offset="1" stop-color="#3a663a"/></linearGradient></defs>
<path d="M1 5 L6 3 L10 1.5 L13.5 1 L17 1.5 L21 3 L26 5 V29 H1 Z" fill="url(#sg)"/><path d="M1 5.5 L6 3.5 L10 2 L13.5 1.5 L17 2 L21 3.5 L26 5.5" stroke="#4f7f4f" stroke-width="1.2" fill="none"/><path d="M1 28.5 H26" stroke="#4a7a4a" stroke-width="1"/>
</svg>
<div class="abs" style="left:45px;top:667px;width:616px;height:33px;border:1px solid #646464;background:#ffffe6"></div>
<div class="tx" style="left:52px;top:677px;font-size:12px;line-height:14px;color:#0a64d2;"><span style="transform:scaleX(0.888);transform-origin:0 0">PodSilo manages the total disk space used by downloaded episodes.</span></div>
</body></html>
